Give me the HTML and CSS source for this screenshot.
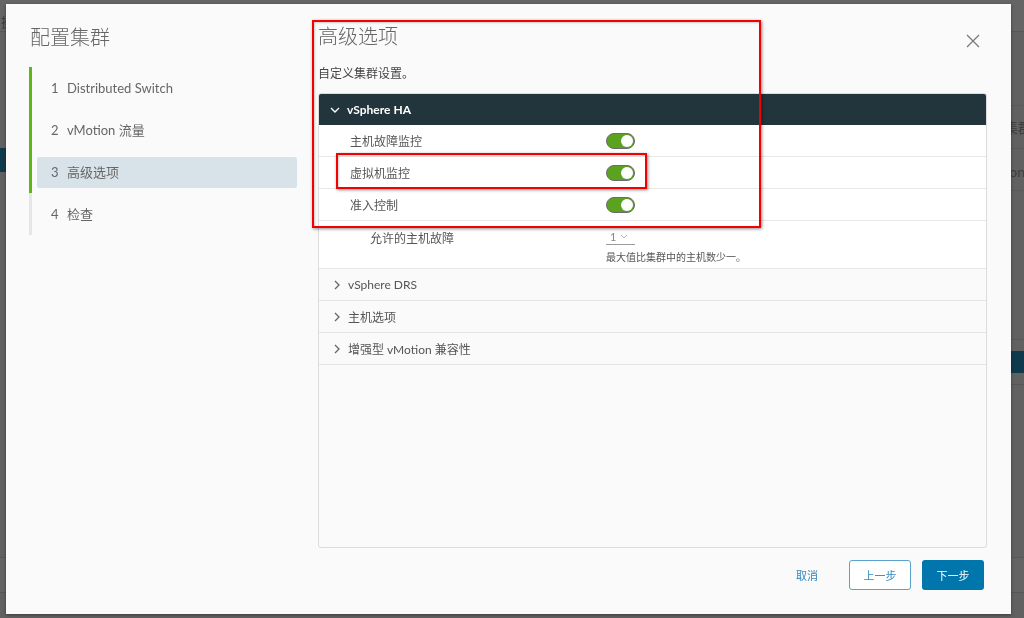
FILE: index.html
```html
<!DOCTYPE html>
<html lang="zh-CN">
<head>
    <meta charset="UTF-8">
    <meta name="viewport" content="width=device-width, initial-scale=1.0">
    <title>配置集群</title>
    <link rel="stylesheet" href="styles.css">
</head>
<body>
    <!-- page behind the dialog, already dimmed -->
    <div class="app">
        <header class="app-header"><span class="app-brand">操</span></header>
        <div class="app-body">
            <nav class="app-nav">
                <div class="nav-item active"></div>
            </nav>
            <main class="app-main">
                <div class="grid-head"><span>集群</span></div>
                <div class="grid-row"><span>vMotion</span></div>
                <div class="grid-gap"></div>
                <div class="grid-bar"><span class="grid-btn"></span></div>
            </main>
        </div>
        <footer class="app-footer"></footer>
    </div>

    <div class="modal">
        <button class="close-btn" aria-label="关闭">
            <svg width="14" height="14" viewBox="0 0 14 14"><path d="M1 1L13 13M13 1L1 13" stroke="#7a7a7a" stroke-width="1.3" fill="none"/></svg>
        </button>

        <aside class="wizard-nav">
            <h2 class="wizard-title">配置集群</h2>
            <ol class="steps">
                <li class="step done"><div class="step-label"><span class="step-num">1</span>Distributed Switch</div></li>
                <li class="step done"><div class="step-label"><span class="step-num">2</span>vMotion 流量</div></li>
                <li class="step done"><div class="step-label current"><span class="step-num">3</span>高级选项</div></li>
                <li class="step"><div class="step-label"><span class="step-num">4</span>检查</div></li>
            </ol>
        </aside>

        <section class="wizard-page">
            <h2 class="page-title">高级选项</h2>
            <p class="page-desc">自定义集群设置。</p>

            <div class="stack">
                <div class="stack-head">
                    <svg width="10" height="6" viewBox="0 0 10 6"><path d="M1 1L5 5L9 1" stroke="#fff" stroke-width="1.4" fill="none"/></svg>
                    <span>vSphere HA</span>
                </div>
                <div class="stack-row">
                    <span class="row-label">主机故障监控</span>
                    <span class="toggle"></span>
                </div>
                <div class="stack-row">
                    <span class="row-label">虚拟机监控</span>
                    <span class="toggle"></span>
                </div>
                <div class="stack-row">
                    <span class="row-label">准入控制</span>
                    <span class="toggle"></span>
                </div>
                <div class="stack-row tall">
                    <span class="row-label sub">允许的主机故障</span>
                    <div class="field">
                        <div class="select">1
                            <svg width="8" height="5" viewBox="0 0 8 5"><path d="M1 1L4 4L7 1" stroke="#b5b5b5" stroke-width="1" fill="none"/></svg>
                        </div>
                        <div class="help">最大值比集群中的主机数少一。</div>
                    </div>
                </div>
                <div class="stack-section">
                    <svg width="6" height="10" viewBox="0 0 6 10"><path d="M1 1L5 5L1 9" stroke="#666" stroke-width="1.3" fill="none"/></svg>
                    <span>vSphere DRS</span>
                </div>
                <div class="stack-section">
                    <svg width="6" height="10" viewBox="0 0 6 10"><path d="M1 1L5 5L1 9" stroke="#666" stroke-width="1.3" fill="none"/></svg>
                    <span>主机选项</span>
                </div>
                <div class="stack-section">
                    <svg width="6" height="10" viewBox="0 0 6 10"><path d="M1 1L5 5L1 9" stroke="#666" stroke-width="1.3" fill="none"/></svg>
                    <span>增强型 vMotion 兼容性</span>
                </div>
            </div>

            <div class="wizard-footer">
                <button class="btn btn-link">取消</button>
                <button class="btn btn-outline">上一步</button>
                <button class="btn btn-primary">下一步</button>
            </div>
        </section>

        <!-- annotation marks -->
        <div class="mark mark-big"></div>
        <div class="mark mark-small"></div>
    </div>
</body>
</html>
```

FILE: styles.css
```css
body {
    margin: 0;
    font-family: Lato, "Noto Sans CJK SC", sans-serif;
    background: #616161;
    overflow: hidden;
}

/* dimmed page behind */
.app {
    height: 618px;
    display: flex;
    flex-direction: column;
}

.app-header {
    height: 31px;
    border-bottom: 1px solid #575757;
    background: #656565;
}

.app-brand {
    display: block;
    padding: 12px 0 0 1px;
    font-size: 13px;
    color: #3c3c3c;
}

.app-body {
    height: 525px;
    display: flex;
}

.app-nav {
    width: 200px;
    padding-top: 116px;
}

.nav-item {
    height: 24px;
}

.nav-item.active {
    width: 6px;
    background: #0f3a4e;
}

.app-main {
    flex: 1;
    padding-top: 73px;
}

.grid-head,
.grid-row {
    height: 41px;
    border-top: 1px solid #5a5a5a;
    display: flex;
    justify-content: flex-end;
    align-items: center;
    margin-right: -8px;
    font-size: 14px;
    color: #3e3e3e;
}

.grid-head {
    height: 42px;
}

.grid-row {
    align-items: flex-start;
    padding-top: 14px;
    height: 27px;
    margin-right: -1px;
}

.grid-gap {
    height: 148px;
    border-top: 1px solid #5a5a5a;
    border-bottom: 1px solid #585858;
}

.grid-bar {
    height: 44px;
    border-bottom: 1px solid #575757;
    display: flex;
    justify-content: flex-end;
}

.grid-btn {
    width: 40px;
    height: 22px;
    margin-top: 11px;
    background: #0f3a4e;
}

.app-footer {
    height: 34px;
    border-top: 1px solid #575757;
    border-bottom: 1px solid #575757;
    background: #646464;
}

/* dialog */
.modal {
    position: fixed;
    left: 6px;
    top: 4px;
    width: 1005px;
    height: 610px;
    box-sizing: border-box;
    padding: 23px 24px 24px 23px;
    background: #fafafa;
    box-shadow: 0 1px 3px rgba(0, 0, 0, 0.4);
    display: flex;
    gap: 21px;
}

.close-btn {
    position: absolute;
    top: 30px;
    right: 31px;
    padding: 0;
    border: none;
    background: none;
    cursor: pointer;
}

.wizard-nav {
    width: 268px;
    flex-shrink: 0;
}

.wizard-title,
.page-title {
    margin: 0;
    font-size: 20px;
    line-height: 20px;
    font-weight: 300;
    color: #666;
}

.wizard-title {
    padding-left: 1px;
}

.steps {
    list-style: none;
    margin: 20px 0 0;
    padding: 0;
}

.step {
    border-left: 3px solid #e6e6e6;
    padding: 5.5px 0 5.5px 5px;
}

.step.done {
    border-left-color: #5eb715;
}

.step-label {
    height: 31px;
    line-height: 31px;
    padding-left: 14px;
    font-size: 13px;
    color: #666;
    border-radius: 2px;
}

.step-label.current {
    background: #d8e3e9;
}

.step-num {
    display: inline-block;
    width: 16px;
}

.wizard-page {
    flex: 1;
    display: flex;
    flex-direction: column;
    min-width: 0;
}

.page-title {
    margin-top: -1px;
}

.page-desc {
    margin: 20px 0 11px;
    font-size: 12px;
    line-height: 16px;
    color: #444;
}

.stack {
    flex: 1;
    border: 1px solid #dcdcdc;
    border-radius: 3px;
    background: #fafafa;
    overflow: hidden;
}

.stack-head {
    height: 31px;
    background: #22343c;
    display: flex;
    align-items: center;
    gap: 7px;
    padding-left: 11px;
    font-size: 12px;
    font-weight: bold;
    color: #fff;
}

.stack-row {
    height: 31px;
    display: flex;
    align-items: center;
    background: #fff;
    border-bottom: 1px solid #e8e8e8;
    font-size: 12px;
    color: #555;
}

.row-label {
    width: 256px;
    padding-left: 31px;
    flex-shrink: 0;
}

.row-label.sub {
    width: 236px;
    padding-left: 51px;
}

.toggle {
    position: relative;
    width: 27px;
    height: 14px;
    border: 1px solid #6b6b6b;
    border-radius: 8px;
    background: #5aa220;
}

.toggle::after {
    content: "";
    position: absolute;
    right: 1px;
    top: 1px;
    width: 12px;
    height: 12px;
    border-radius: 50%;
    background: #fff;
}

.stack-row.tall {
    height: 47px;
    align-items: flex-start;
    padding-top: 0;
}

.stack-row.tall .row-label {
    padding-top: 8px;
}

.field {
    padding-top: 8px;
}

.select {
    width: 29px;
    height: 16px;
    box-sizing: border-box;
    padding-left: 4px;
    border-bottom: 1px solid #9a9a9a;
    font-size: 11px;
    line-height: 14px;
    color: #888;
    display: flex;
    align-items: center;
    gap: 4px;
}

.help {
    margin-top: 5px;
    font-size: 10px;
    line-height: 14px;
    color: #565656;
}

.stack-section {
    height: 31px;
    display: flex;
    align-items: center;
    gap: 8px;
    padding-left: 15px;
    border-bottom: 1px solid #e4e4e4;
    font-size: 12px;
    color: #555;
}

.stack-section:first-of-type {
    height: 32px;
}

.wizard-footer {
    display: flex;
    justify-content: flex-end;
    gap: 11px;
    margin-top: 12px;
    padding-right: 3px;
}

.btn {
    width: 62px;
    height: 30px;
    box-sizing: border-box;
    border-radius: 3px;
    font-family: inherit;
    font-size: 11px;
    cursor: pointer;
}

.btn-link {
    border: none;
    background: none;
    color: #2f88bd;
}

.btn-outline {
    border: 1px solid #5aa3cc;
    background: #fff;
    color: #2f88bd;
}

.btn-primary {
    border: none;
    background: #0076ac;
    color: #fff;
}

.mark {
    position: absolute;
    border: 2px solid #f30000;
    box-shadow: 1px 1px 3px rgba(0, 0, 0, 0.45), inset 1px 1px 2px rgba(0, 0, 0, 0.2);
    pointer-events: none;
}

.mark-big {
    left: 306px;
    top: 16px;
    width: 445px;
    height: 204px;
}

.mark-small {
    left: 330px;
    top: 149px;
    width: 307px;
    height: 32px;
}
```
